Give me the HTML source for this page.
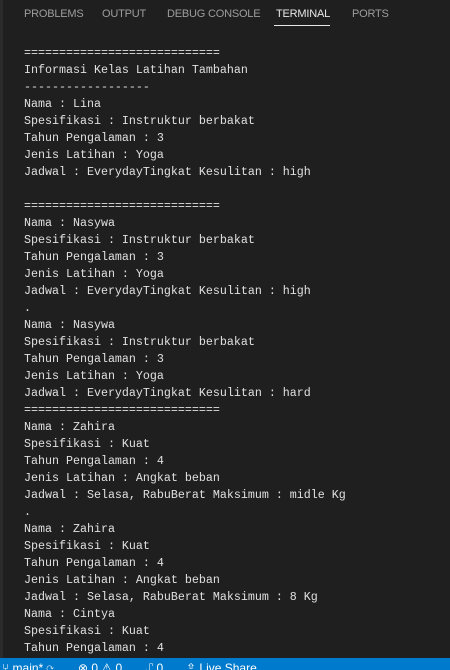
<!DOCTYPE html>
<html><head><style>
html,body{margin:0;padding:0;width:450px;height:670px;overflow:hidden;background:#1f1f1f;}
.edge{position:absolute;left:0;top:0;width:3px;height:658px;background:#2b2b2b;}
.tab{position:absolute;top:8px;font:11px "Liberation Sans",sans-serif;color:#9d9d9d;letter-spacing:-0.2px;}
.act{color:#e7e7e7;}
.ul{position:absolute;left:274px;top:25px;width:56px;height:1px;background:#e7e7e7;}
pre{position:absolute;left:24px;top:45px;margin:0;font:11.67px/17px "Liberation Mono",monospace;color:#e0e0e0;}
.sb{position:absolute;left:0;top:658px;width:450px;height:12px;background:#007acc;overflow:hidden;}
.sb span{position:absolute;top:3px;font:12px "Liberation Sans",sans-serif;color:#fff;}
</style></head><body>
<div class="edge"></div>
<div class="tab" style="left:24px">PROBLEMS</div>
<div class="tab" style="left:102px">OUTPUT</div>
<div class="tab" style="left:167px">DEBUG CONSOLE</div>
<div class="tab act" style="left:276px">TERMINAL</div>
<div class="tab" style="left:352px">PORTS</div>
<div class="ul"></div>
<pre>============================
Informasi Kelas Latihan Tambahan
------------------
Nama : Lina
Spesifikasi : Instruktur berbakat
Tahun Pengalaman : 3
Jenis Latihan : Yoga
Jadwal : EverydayTingkat Kesulitan : high

============================
Nama : Nasywa
Spesifikasi : Instruktur berbakat
Tahun Pengalaman : 3
Jenis Latihan : Yoga
Jadwal : EverydayTingkat Kesulitan : high
.
Nama : Nasywa
Spesifikasi : Instruktur berbakat
Tahun Pengalaman : 3
Jenis Latihan : Yoga
Jadwal : EverydayTingkat Kesulitan : hard
============================
Nama : Zahira
Spesifikasi : Kuat
Tahun Pengalaman : 4
Jenis Latihan : Angkat beban
Jadwal : Selasa, RabuBerat Maksimum : midle Kg
.
Nama : Zahira
Spesifikasi : Kuat
Tahun Pengalaman : 4
Jenis Latihan : Angkat beban
Jadwal : Selasa, RabuBerat Maksimum : 8 Kg
Nama : Cintya
Spesifikasi : Kuat
Tahun Pengalaman : 4</pre>
<div class="sb">
<span style="left:2px">⑂ main* ⟳</span>
<span style="left:78px">⊗ 0 ⚠ 0</span>
<span style="left:146px">⑀ 0</span>
<span style="left:186px">⇪ Live Share</span>
</div>
</body></html>
